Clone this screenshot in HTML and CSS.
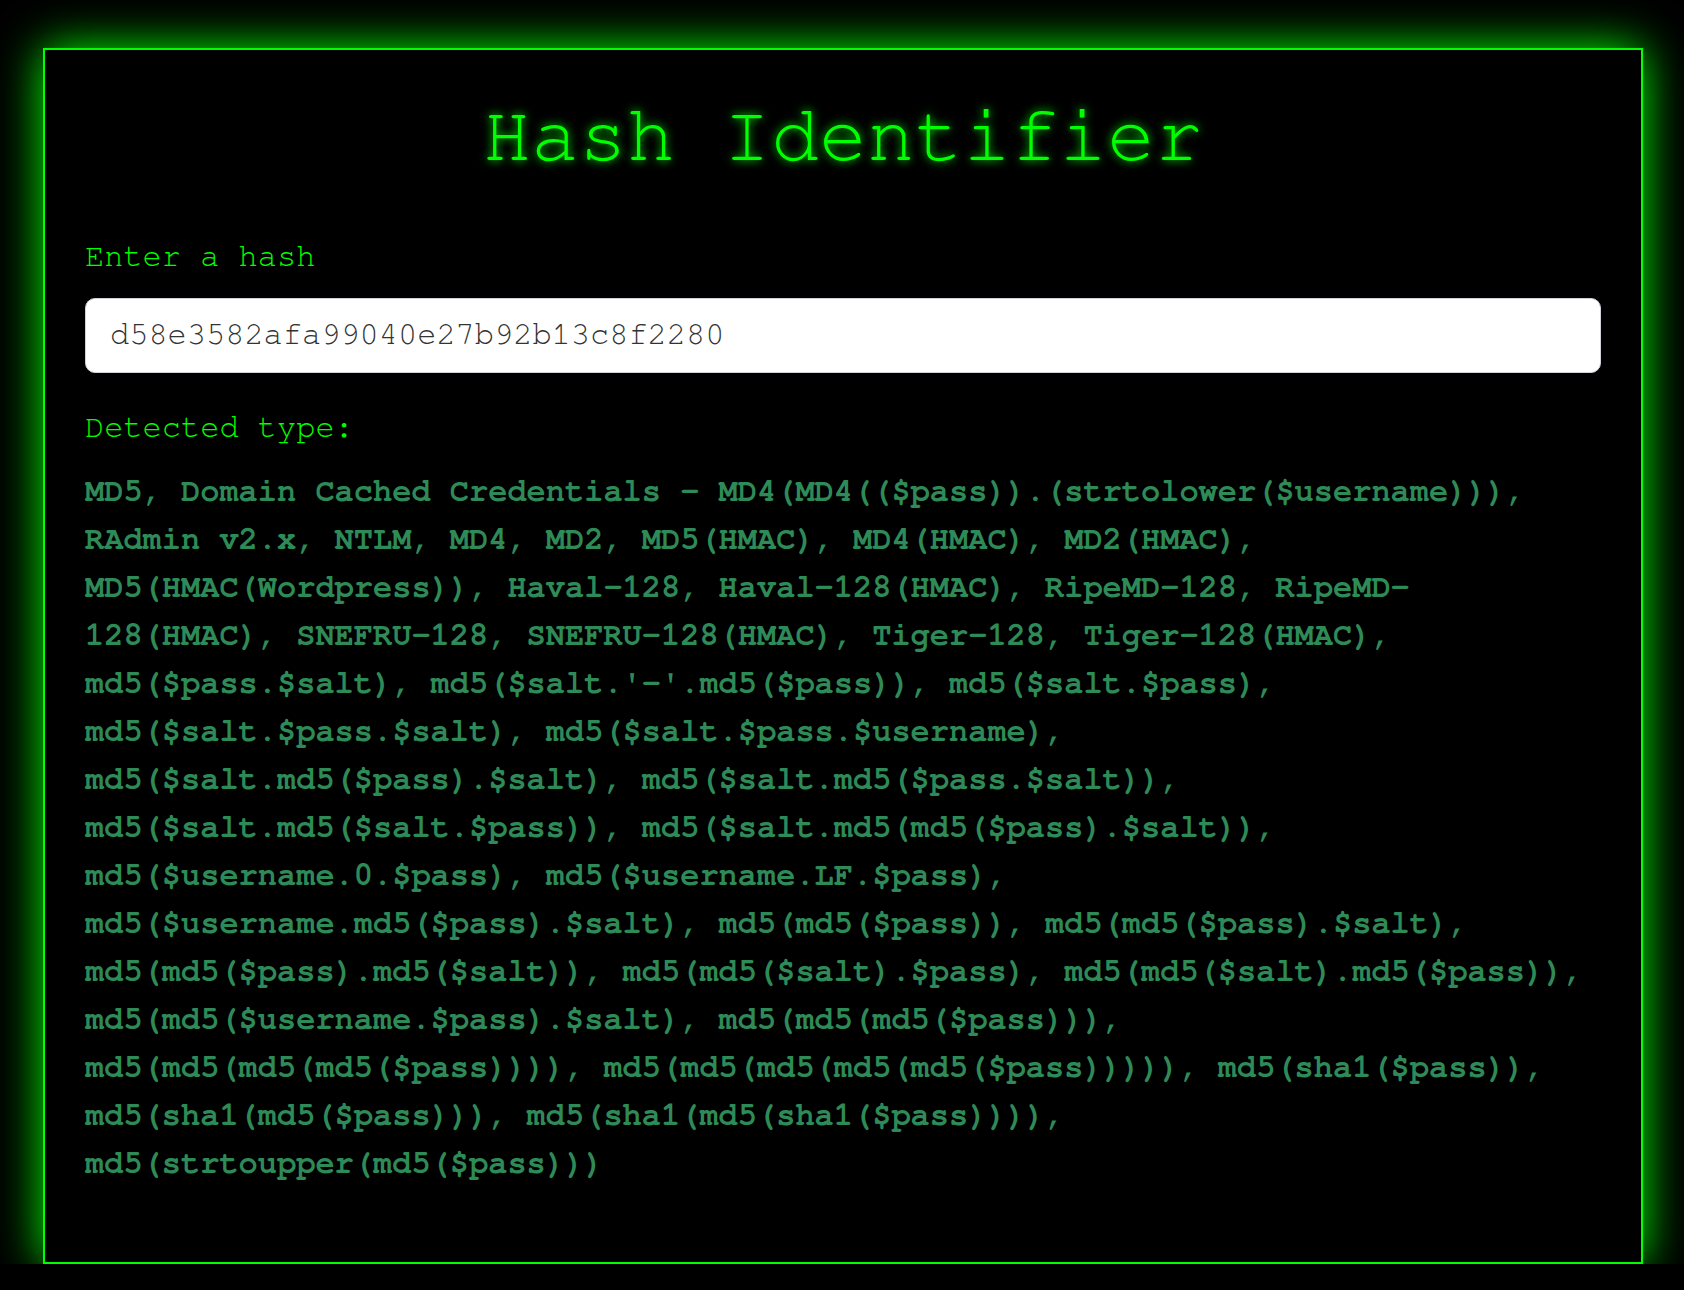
FILE: index.html
```html
<!DOCTYPE html>
<html lang="en">
<head>
<meta charset="utf-8">
<title>Hash Identifier</title>
<link rel="stylesheet" href="styles.css">
</head>
<body>
<main class="panel">
  <h1 class="title">Hash Identifier</h1>
  <label class="label" for="hash">Enter a hash</label>
  <input class="hash-input" id="hash" type="text" value="d58e3582afa99040e27b92b13c8f2280">
  <div class="label detected">Detected type:</div>
  <p class="result">MD5, Domain Cached Credentials - MD4(MD4(($pass)).(strtolower($username))), RAdmin v2.x, NTLM, MD4, MD2, MD5(HMAC), MD4(HMAC), MD2(HMAC), MD5(HMAC(Wordpress)), Haval-128, Haval-128(HMAC), RipeMD-128, RipeMD-128(HMAC), SNEFRU-128, SNEFRU-128(HMAC), Tiger-128, Tiger-128(HMAC), md5($pass.$salt), md5($salt.'-'.md5($pass)), md5($salt.$pass), md5($salt.$pass.$salt), md5($salt.$pass.$username), md5($salt.md5($pass).$salt), md5($salt.md5($pass.$salt)), md5($salt.md5($salt.$pass)), md5($salt.md5(md5($pass).$salt)), md5($username.0.$pass), md5($username.LF.$pass), md5($username.md5($pass).$salt), md5(md5($pass)), md5(md5($pass).$salt), md5(md5($pass).md5($salt)), md5(md5($salt).$pass), md5(md5($salt).md5($pass)), md5(md5($username.$pass).$salt), md5(md5(md5($pass))), md5(md5(md5(md5($pass)))), md5(md5(md5(md5(md5($pass))))), md5(sha1($pass)), md5(sha1(md5($pass))), md5(sha1(md5(sha1($pass)))), md5(strtoupper(md5($pass)))</p>
</main>
</body>
</html>
```
FILE: styles.css
```css
html, body {
  background: #000;
}
body {
  margin: 0;
  padding: 48px 41px 0 43px;
  font-family: "Nimbus Mono PS", "Nimbus Mono L", FreeMono, "Liberation Mono", monospace;
  color: #00ff00;
}
.panel {
  box-sizing: border-box;
  width: 1600px;
  border: 2px solid #00ff00;
  background: #000;
  padding: 38px 40px 42px;
  box-shadow: 0 0 44px #00ff00;
}
.title {
  margin: 0 0 48px;
  font-size: 80px;
  font-weight: normal;
  line-height: 96px;
  text-align: center;
  color: #00ff00;
  text-shadow: 0 0 10px #00ff00;
}
.label {
  display: block;
  font-size: 32px;
  line-height: 48px;
  color: #00ff00;
}
.hash-input {
  display: block;
  box-sizing: border-box;
  width: 100%;
  height: 75px;
  margin: 18px 0 0;
  padding: 0 24px 4px;
  border: 1px solid #cfd3d8;
  border-radius: 10px;
  background: #fff;
  color: #333;
  font-family: inherit;
  font-size: 32px;
  outline: none;
}
.detected {
  margin-top: 30px;
}
.result {
  margin: 16px 0 33px;
  font-size: 32px;
  line-height: 48px;
  font-weight: bold;
  color: #2e8b57;
}
```
